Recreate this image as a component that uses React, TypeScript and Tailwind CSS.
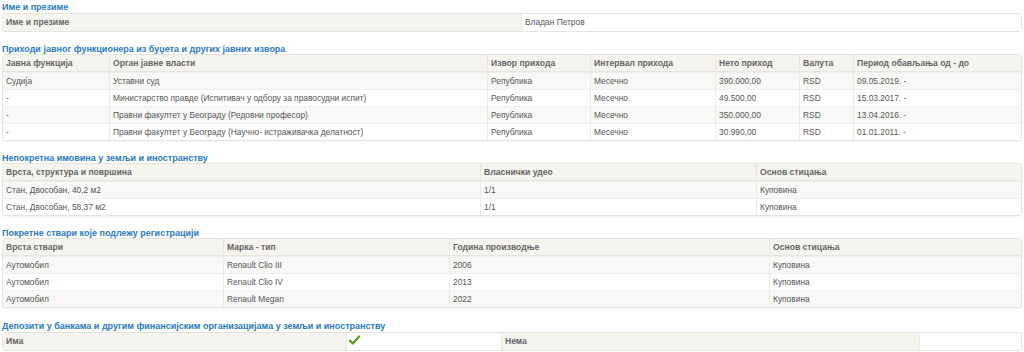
import { ReactNode } from 'react'

type Cell = ReactNode
type TableProps = {
  cols: string[]
  head?: Cell[]
  rows: Cell[][]
}

// heading above each table
function SectionTitle(props: { children: ReactNode; className: string }) {
  return <h3 className={'font-bold text-[9px] text-[#2a7abf] ' + props.className}>{props.children}</h3>
}

function DataTable(props: TableProps) {
  return (
    <div className="rounded-[3px] border border-[#e4e4de] shadow-[0_1px_1px_rgba(0,0,0,0.04)] overflow-hidden text-[8.4px] leading-[16px] text-[#555]">
      {props.head && (
        <div className="flex h-[17px] bg-[#f5f4ef] border-b border-[#e6e5de]">
          {props.head.map((h, i) => (
            <div
              key={i}
              className={'px-[3px] font-bold text-[8.6px] text-[#666] whitespace-nowrap border-l border-[#e6e6e0] first:border-l-0 ' + props.cols[i]}
            >
              {h}
            </div>
          ))}
        </div>
      )}
      {props.rows.map((r, ri) => (
        <div
          key={ri}
          className={
            'flex h-[17px] first:border-t-0 border-t border-[#eeeeea] ' + (ri % 2 === 0 ? 'bg-[#f8f8f6]' : 'bg-white')
          }
        >
          {r.map((c, ci) => (
            <div
              key={ci}
              className={'px-[3px] whitespace-nowrap border-l border-[#ebebe6] first:border-l-0 ' + props.cols[ci]}
            >
              {c}
            </div>
          ))}
        </div>
      ))}
    </div>
  )
}

function Check() {
  return (
    <svg width="11" height="10" viewBox="0 0 12 11" className="inline-block align-[-1px]">
      <path d="M1 6.2 L4.2 9.4 L11 1.6" fill="none" stroke="#5b9a1a" strokeWidth="2.4" strokeLinecap="round" strokeLinejoin="round" />
    </svg>
  )
}

export default function App() {
  return (
    <div className="w-[1024px] h-[352px] overflow-hidden bg-white px-[2px] font-['Liberation_Sans',Arial,sans-serif]">
      {/* Name */}
      <SectionTitle className="mt-[2px] leading-[11px]">Име и презиме</SectionTitle>
      <div className="flex rounded-[3px] border border-[#e4e4de] overflow-hidden text-[8.4px] leading-[16px] text-[#555]">
        <div className="w-[518px] h-[17px] bg-[#f5f4ef] px-[3px] font-bold text-[8.6px] text-[#666]">Име и презиме</div>
        <div className="flex-1 h-[17px] bg-white px-[3px] border-l border-[#ebebe6]">Владан Петров</div>
      </div>

      {/* Income */}
      <SectionTitle className="mt-[12px] leading-[10px]">Приходи јавног функционера из буџета и других јавних извора</SectionTitle>
      <DataTable
        cols={['w-[106px]', 'w-[378px]', 'w-[103px]', 'w-[125px]', 'w-[84px]', 'w-[54px]', 'flex-1']}
        head={['Јавна функција', 'Орган јавне власти', 'Извор прихода', 'Интервал прихода', 'Нето приход', 'Валута', 'Период обављања од - до']}
        rows={[
          ['Судија', 'Уставни суд', 'Република', 'Месечно', '390.000,00', 'RSD', '09.05.2019. -'],
          ['-', 'Министарство правде (Испитивач у одбору за правосудни испит)', 'Република', 'Месечно', '49.500,00', 'RSD', '15.03.2017. -'],
          ['-', 'Правни факултет у Београду (Редовни професор)', 'Република', 'Месечно', '350.000,00', 'RSD', '13.04.2016. -'],
          ['-', 'Правни факултет у Београду (Научно- истраживачка делатност)', 'Република', 'Месечно', '30.990,00', 'RSD', '01.01.2011. -'],
        ]}
      />

      {/* Real estate */}
      <SectionTitle className="mt-[12px] leading-[10px]">Непокретна имовина у земљи и иностранству</SectionTitle>
      <DataTable
        cols={['w-[477px]', 'w-[276px]', 'flex-1']}
        head={['Врста, структура и површина', 'Власнички удео', 'Основ стицања']}
        rows={[
          ['Стан, Двособан, 40,2 м2', '1/1', 'Куповина'],
          ['Стан, Двособан, 58,37 м2', '1/1', 'Куповина'],
        ]}
      />

      {/* Vehicles */}
      <SectionTitle className="mt-[12px] leading-[10px]">Покретне ствари које подлежу регистрацији</SectionTitle>
      <DataTable
        cols={['w-[220px]', 'w-[226px]', 'w-[320px]', 'flex-1']}
        head={['Врста ствари', 'Марка - тип', 'Година производње', 'Основ стицања']}
        rows={[
          ['Аутомобил', 'Renault Clio III', '2006', 'Куповина'],
          ['Аутомобил', 'Renault Clio IV', '2013', 'Куповина'],
          ['Аутомобил', 'Renault Megan', '2022', 'Куповина'],
        ]}
      />

      {/* Deposits */}
      <SectionTitle className="mt-[13px] leading-[11px]">
        Депозити у банкама и другим финансијским организацијама у земљи и иностранству
      </SectionTitle>
      <div className="flex rounded-[3px] border border-[#e4e4de] overflow-hidden text-[8.4px] leading-[16px] text-[#555]">
        <div className="w-[343px] h-[17px] bg-[#f5f4ef] px-[3px] font-bold text-[8.6px] text-[#666]">Има</div>
        <div className="w-[155px] h-[17px] bg-white px-[2px] border-l border-[#ebebe6]">
          <Check />
        </div>
        <div className="w-[418px] h-[17px] bg-[#f5f4ef] px-[3px] font-bold text-[8.6px] text-[#666] border-l border-[#ebebe6]">Нема</div>
        <div className="flex-1 h-[17px] bg-white border-l border-[#ebebe6]"></div>
      </div>
    </div>
  )
}
